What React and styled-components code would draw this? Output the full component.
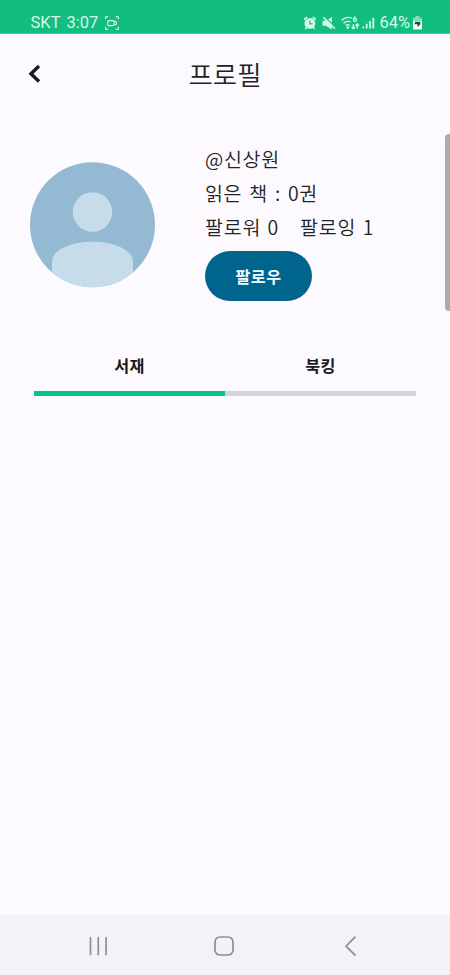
import React from 'react';
import styled, { createGlobalStyle } from 'styled-components';

const GlobalStyle = createGlobalStyle`
  * { box-sizing: border-box; }
  body { margin: 0; background: #fcfafe; }
`;

const Screen = styled.div`
  position: relative;
  width: 450px;
  height: 975px;
  overflow: hidden;
  display: flex;
  flex-direction: column;
  background: #fcfafe;
  color: #222224;
  font-family: 'Noto Sans CJK KR', sans-serif;
`;

const StatusBar = styled.header`
  flex: none;
  height: 34px;
  padding: 12px 28.5px 0 30.5px;
  display: flex;
  justify-content: space-between;
  background: #12bd80;
  border-bottom: 1px solid #3fca99;
  color: #d9f8e9;
  font: 400 16.5px/22px Roboto, sans-serif;
`;

const StatusGroup = styled.div`
  display: flex;
  height: 22px;
  align-items: center;
`;

const Carrier = styled.span`
  width: 36px;
`;

const Clock = styled.span`
  width: 38px;
`;

const Battery = styled.span`
  width: 33px;
  white-space: nowrap;
`;

const Icon = styled.svg`
  display: block;
  flex: none;
  overflow: visible;
`;

const AppBar = styled.div`
  flex: none;
  height: 79px;
  display: grid;
  grid-template-columns: 70px 1fr 70px;
  align-items: center;
`;

const BackButton = styled.button`
  width: 70px;
  height: 79px;
  padding: 0;
  border: 0;
  background: none;
`;

const Title = styled.h1`
  margin: 0;
  text-align: center;
  font-size: 26.4px;
  font-weight: 350;
  line-height: 40px;
`;

const Profile = styled.section`
  flex: none;
  height: 225px;
  display: flex;
`;

const Avatar = styled.div`
  width: 205px;
  padding: 49px 0 0 30px;
`;

const Details = styled.div`
  padding-top: 29px;
`;

const Line = styled.p`
  display: flex;
  gap: ${({ $gap }) => $gap || 0}px;
  margin: 0;
  height: 34px;
  white-space: pre;
  font-size: 19.5px;
  font-weight: 350;
  line-height: 34px;
  letter-spacing: ${({ $tracking }) => $tracking || 0.5}px;
  word-spacing: ${({ $words }) => $words || 0}px;
`;

const FollowButton = styled.button`
  display: block;
  width: 107px;
  height: 50px;
  margin-top: 7px;
  padding: 0 0 1px;
  border: 0;
  border-radius: 25px;
  background: #00658d;
  color: #f4fbff;
  font: 600 16.2px/48px 'Noto Sans CJK KR', sans-serif;
  letter-spacing: 0.4px;
`;

const Tabs = styled.nav`
  flex: none;
  display: flex;
  width: 382px;
  margin: 1px 0 0 34px;
`;

const Tab = styled.button`
  flex: 1;
  height: 57px;
  padding: 0 0 1px;
  border: 0;
  border-bottom: 5px solid ${({ $active }) => ($active ? '#00c78b' : '#d5d3d6')};
  background: none;
  color: #19191b;
  font: 600 16.2px/24px 'Noto Sans CJK KR', sans-serif;
  letter-spacing: 0.3px;
`;

const Content = styled.main`
  flex: 1;
`;

const ScrollThumb = styled.div`
  position: absolute;
  right: 0;
  top: 134px;
  width: 5px;
  height: 177px;
  border-radius: 4px 0 0 4px;
  background: #adabae;
`;

const NavBar = styled.footer`
  flex: none;
  height: 60px;
  padding: 2px 36px 0 35px;
  display: grid;
  grid-template-columns: repeat(3, 1fr);
  place-items: center;
  background: #f4f2f6;
`;

const RecordIcon = () => (
  <Icon width="14" height="14" viewBox="0 0 14 14" fill="none" stroke="currentColor" strokeWidth="1.1">
    <path d="M.6 3.2V1.6q0-1 1-1h1.6M10.8.6h1.6q1 0 1 1v1.6M13.4 10.8v1.6q0 1-1 1h-1.6M3.2 13.4H1.6q-1 0-1-1v-1.6" />
    <rect x="2.8" y="4.6" width="6.4" height="5" rx="1.2" />
    <path d="M9.2 5.5h1.5q.6 0 .6.6v2q0 .6-.6.6H9.2" />
  </Icon>
);

const StatusIcons = () => (
  <Icon width="77" height="16" viewBox="0 0 77 16">
    <g fill="none" stroke="currentColor">
      <path d="M1 4.6l3-2.5M9.8 2.1l3 2.5" strokeWidth="1.7" />
      <path d="M3.5 12.5l-1.3 1.4M10.3 12.5l1.3 1.4" strokeWidth="1.5" />
    </g>
    <circle cx="6.9" cy="8.4" r="5.4" fill="currentColor" />
    <path d="M6.9 5.5v3.3h2.8" fill="none" stroke="#12bd80" strokeWidth="1.2" />
    <path d="M19.6 5.8h3.4L28.8 2v12.5L23 10.8h-3.4z" fill="currentColor" />
    <path d="M21.4 1.4l11 11" stroke="#12bd80" strokeWidth="1.4" />
    <path d="M20.4 2.2l11.6 11.6" fill="none" stroke="currentColor" strokeWidth="1.5" />
    <g fill="none" stroke="currentColor" strokeWidth="1.3">
      <path d="M38.5 5.5Q43.5 1 49 3M40.5 8.2q3.5-3 7.2-1.2M42.6 10.5q2.2-1.7 4.2 0" />
      <path d="M52.7 1.9Q50.4 2.5 50.5 5" />
      <circle cx="52" cy="5.1" r="1.5" />
      <path d="M50.3 9v4.7M48.5 12l1.8 1.8 1.8-1.8M54.2 13.8V9M52.4 10.8L54.2 9l1.8 1.8" />
    </g>
    <circle cx="44.8" cy="12.6" r="1.3" fill="currentColor" />
    <path d="M60.4 13.6v-2.2M63.7 13.6V8.8M67 13.6V6M70.3 13.6V2.8" stroke="currentColor" strokeWidth="1.8" />
  </Icon>
);

const BatteryIcon = () => (
  <Icon width="9" height="14" viewBox="0 0 9 14">
    <path d="M2.7 0h3.6v1.5H8q1 0 1 1V6H0V2.5q0-1 1-1h1.7z" fill="#83ddb9" />
    <path d="M0 5h9v7.5q0 1-1 1H1q-1 0-1-1z" fill="#effff6" />
    <path d="M2 5.7h5.3v2.6L4.4 11.3l.2-3H1.7z" fill="#234f3e" />
  </Icon>
);

export default function App() {
  return (
    <>
      <GlobalStyle />
      <Screen>
        <StatusBar>
          <StatusGroup>
            <Carrier>SKT</Carrier>
            <Clock>3:07</Clock>
            <RecordIcon />
          </StatusGroup>
          <StatusGroup>
            <StatusIcons />
            <Battery>64%</Battery>
            <BatteryIcon />
          </StatusGroup>
        </StatusBar>
        <AppBar>
          <BackButton aria-label="뒤로">
            <Icon width="70" height="79" viewBox="0 0 70 79">
              <path d="M39 32l-8 7.7 8 7.8" fill="none" stroke="#19191b" strokeWidth="3.4" />
            </Icon>
          </BackButton>
          <Title>프로필</Title>
        </AppBar>
        <Profile>
          <Avatar>
            <Icon width="125" height="126" viewBox="0 0 125 126">
              <defs>
                <clipPath id="avatar-clip">
                  <circle cx="62.5" cy="62.8" r="62.5" />
                </clipPath>
              </defs>
              <g clipPath="url(#avatar-clip)">
                <path d="M0 0h125v126H0z" fill="#93b9d3" />
                <circle cx="62.5" cy="50" r="19.8" fill="#c6dcea" />
                <path d="M22 126V100C22 88 40 79.7 62.5 79.7S103 88 103 100v26z" fill="#c6dcea" />
              </g>
            </Icon>
          </Avatar>
          <Details>
            <Line $tracking={0.7}>@신상원</Line>
            <Line $words={2.2} $tracking={0.6}>읽은 책 : 0권</Line>
            <Line $gap={21} $words={1.2} $tracking={0.8}>
              <span>팔로워 0</span>
              <span>팔로잉 1</span>
            </Line>
            <FollowButton>팔로우</FollowButton>
          </Details>
        </Profile>
        <Tabs>
          <Tab $active>서재</Tab>
          <Tab>북킹</Tab>
        </Tabs>
        <Content />
        <ScrollThumb />
        <NavBar>
          <Icon width="20" height="20" viewBox="0 0 20 20" stroke="#8f8d91" strokeWidth="1.7" strokeLinecap="round">
            <path d="M2.5 1.5v17M10.3 1.5v17M18.1 1.5v17" />
          </Icon>
          <Icon width="20" height="20" viewBox="0 0 20 20" fill="none" stroke="#8f8d91" strokeWidth="1.7">
            <rect x="1" y="1" width="18" height="18" rx="5" />
          </Icon>
          <Icon width="12" height="20" viewBox="0 0 12 20" fill="none" stroke="#8f8d91" strokeWidth="1.7">
            <path d="M10.5.7L1 10.2l9.5 9.5" />
          </Icon>
        </NavBar>
      </Screen>
    </>
  );
}
